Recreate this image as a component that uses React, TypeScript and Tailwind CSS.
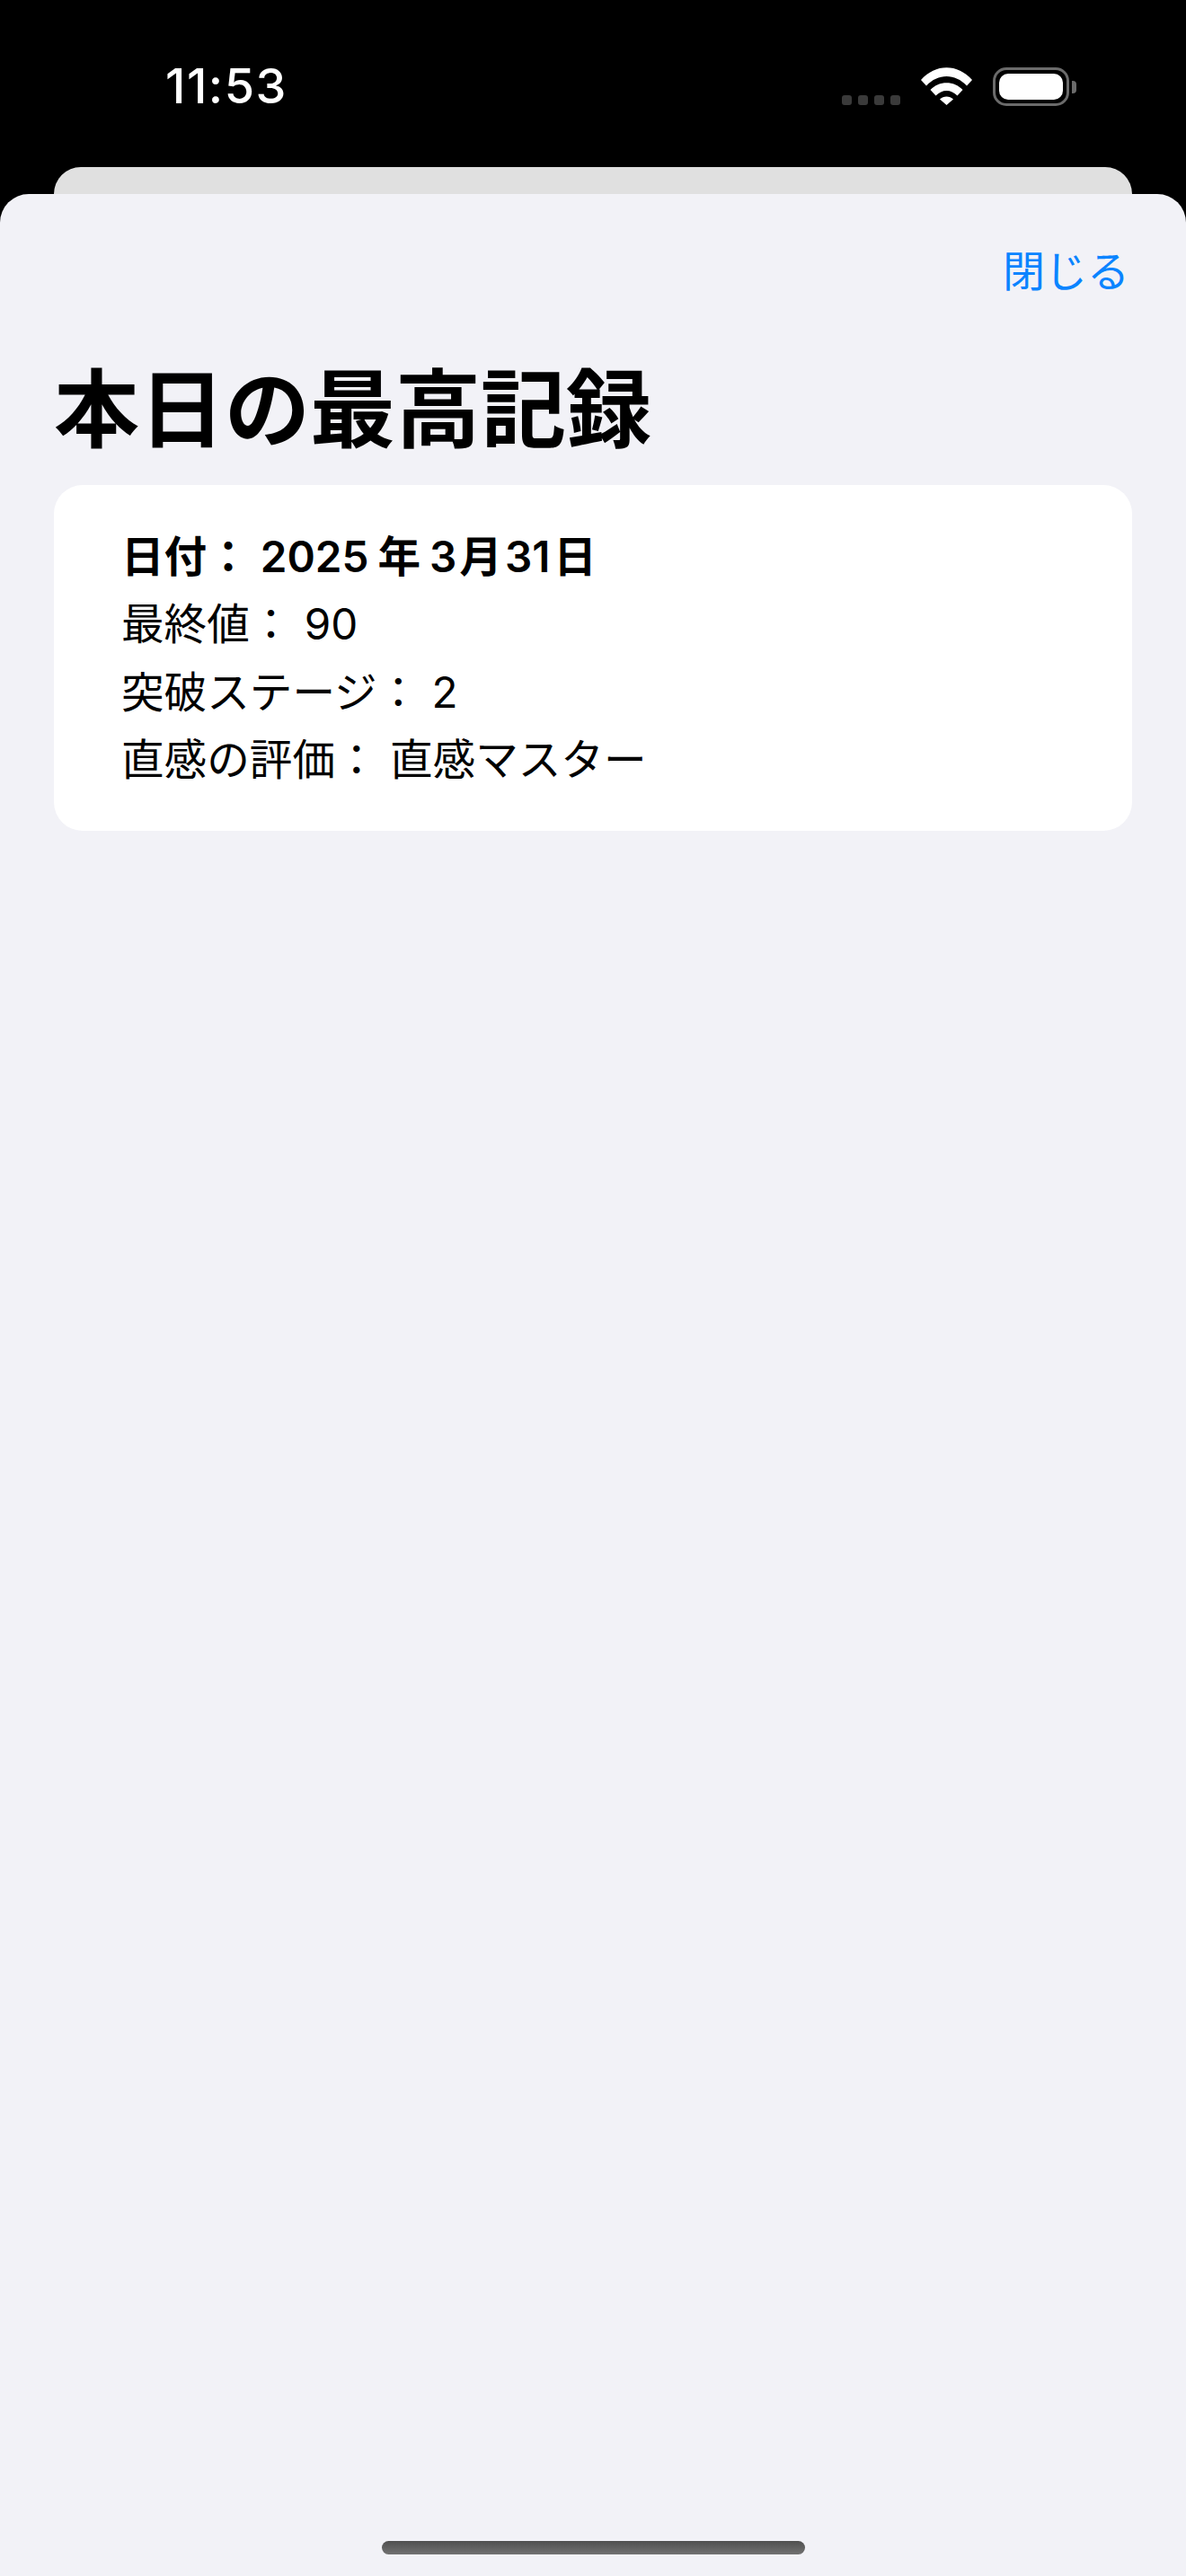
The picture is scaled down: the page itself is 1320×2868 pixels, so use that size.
const FONT = "font-['Inter','Noto_Sans_CJK_JP',sans-serif]";

function StatusIcons() {
  return (
    <div className="flex items-start">
      <div className="flex gap-[7px] mt-[31px]">
        {[0, 1, 2, 3].map((i) => (
          <div key={i} className="w-[11px] h-[11px] rounded-[3px] bg-[#3a3a3a]" />
        ))}
      </div>
      <svg className="ml-[23px]" width="57" height="42" viewBox="0 0 57 42">
        <path d="M0 14 C16 -4.5 41 -4.5 57 14 L51 20.5 C38 6.5 19 6.5 6 20.5 Z" fill="#fff" />
        <path d="M10.5 25 C20 14.5 37 14.5 46.5 25 L40.5 31.5 C33.5 24 23.5 24 16.5 31.5 Z" fill="#fff" />
        <path d="M21 35.5 C25 31.5 32 31.5 36 35.5 L28.5 42 Z" fill="#fff" />
      </svg>
      <div className="ml-[23px] flex items-center">
        <div className="w-[85px] h-[43px] rounded-[15px] border-[3px] border-[#6b6b6b] p-[4px]">
          <div className="w-full h-full rounded-[10px] bg-white" />
        </div>
        <div className="ml-[3px] w-[5px] h-[14px] rounded-r-[4px] bg-[#6b6b6b]" />
      </div>
    </div>
  );
}

function Row({ bold, children }: { bold?: boolean; children: React.ReactNode }) {
  return (
    <div className={`h-[75.4px] leading-[75.4px] whitespace-nowrap ${bold ? 'font-semibold' : 'font-normal'}`}>
      {children}
    </div>
  );
}

export default function App() {
  return (
    <div className={`${FONT} w-[1320px] h-[2868px] bg-black flex flex-col overflow-hidden`}>
      {/* Status bar */}
      <div className="h-[186px] shrink-0 flex items-start justify-between pl-[184px] pr-[122px] pt-[75px]">
        <div className="text-white text-[54px] leading-[42px] font-medium tracking-[1.5px]">11:53</div>
        <StatusIcons />
      </div>

      {/* Sheet behind */}
      <div className="h-[30px] shrink-0 mx-[60px] rounded-t-[32px] bg-[#e0e0e0]" />

      {/* Sheet */}
      <div className="flex-1 flex flex-col rounded-t-[32px] bg-[#f2f2f7] px-[60px]">
        <div className="flex justify-end pt-[58px] pr-[3px]">
          <button className="text-[#0a84ff] text-[47px] leading-[56px]">閉じる</button>
        </div>
        <h1 className="mt-[72px] text-black text-[95px] leading-[110px] font-bold">本日の最高記録</h1>
        <div className="mt-[28px] h-[385px] rounded-[32px] bg-white pl-[75px] pt-[42px] text-black text-[47.6px]">
          <Row bold>
            日付： 2025<span className="mx-[10px]">年</span>3<span className="mx-[3px]">月</span>31<span className="ml-[4px]">日</span>
          </Row>
          <Row>最終値： 90</Row>
          <Row>突破ステージ： 2</Row>
          <Row>直感の評価： 直感マスター</Row>
        </div>
        <div className="mt-auto mb-[24px] mx-auto w-[471px] h-[15px] rounded-full bg-gradient-to-b from-[#505050] to-[#727272]" />
      </div>
    </div>
  );
}
